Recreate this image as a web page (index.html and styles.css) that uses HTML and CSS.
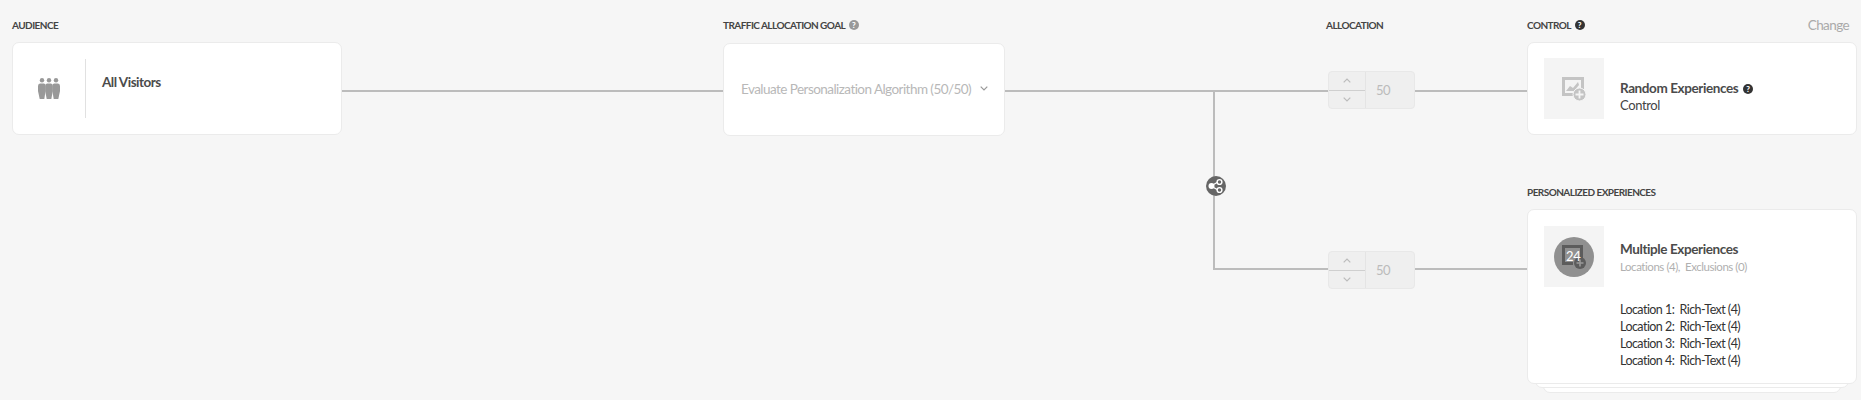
FILE: index.html
```html
<!DOCTYPE html>
<html lang="en">
<head>
    <meta charset="UTF-8">
    <title>Experience Targeting</title>
    <link rel="stylesheet" href="styles.css">
</head>
<body>
    <div class="flow">
        <!-- connector lines -->
        <span class="line" style="left:342px;top:90px;width:381px"></span>
        <span class="line" style="left:1005px;top:90px;width:323px"></span>
        <span class="line" style="left:1415px;top:90px;width:112px"></span>
        <span class="line" style="left:1213px;top:90px;width:2px;height:180px"></span>
        <span class="line" style="left:1213px;top:268px;width:115px"></span>
        <span class="line" style="left:1415px;top:268px;width:112px"></span>

        <span class="split">
            <svg viewBox="0 0 20 20" width="20" height="20">
                <circle cx="10" cy="10" r="10" fill="#666"/>
                <path d="M5 10 L12 6 M5 10 L12 14" stroke="#fff" stroke-width="1.4" fill="none"/>
                <circle cx="5.5" cy="10" r="3" fill="#fff"/>
                <circle cx="13.5" cy="6" r="2.4" fill="#666" stroke="#fff" stroke-width="1.4"/>
                <circle cx="13.5" cy="14" r="2.4" fill="#666" stroke="#fff" stroke-width="1.4"/>
            </svg>
        </span>

        <div class="col col-audience">
            <div class="label">AUDIENCE</div>
            <div class="card audience-card">
                <div class="audience-icon">
                    <svg viewBox="0 0 22 21" width="22" height="21" fill="#999">
                        <circle cx="4" cy="2.2" r="2.2"/>
                        <circle cx="11" cy="2.2" r="2.2"/>
                        <circle cx="18" cy="2.2" r="2.2"/>
                        <path d="M0 8 Q0 5.5 2 5.5 H6 Q7.6 5.5 7.6 8 V13 L6.3 21 H1.7 L0 13 Z"/>
                        <path d="M7.2 8 Q7.2 5.5 9 5.5 H13 Q14.8 5.5 14.8 8 V13 L13.3 21 H8.7 L7.2 13 Z"/>
                        <path d="M14.4 8 Q14.4 5.5 16 5.5 H20 Q22 5.5 22 8 V13 L20.3 21 H15.7 L14.4 13 Z"/>
                    </svg>
                </div>
                <div class="audience-name">All Visitors</div>
            </div>
        </div>

        <div class="col col-goal">
            <div class="label">TRAFFIC ALLOCATION GOAL <span class="help help-grey">?</span></div>
            <div class="card goal-card">
                <span class="goal-text">Evaluate Personalization Algorithm (50/50)</span>
                <svg class="goal-chevron" viewBox="0 0 8 5" width="8" height="5">
                    <path d="M.7 .7 L4 4 L7.3 .7" fill="none" stroke="#999" stroke-width="1.2"/>
                </svg>
            </div>
        </div>

        <div class="col col-allocation">
            <div class="label label-allocation">ALLOCATION</div>
            <div class="stepper stepper-first">
                <div class="stepper-arrows">
                    <span class="arrow"><svg viewBox="0 0 8 5" width="8" height="5"><path d="M.7 4.3 L4 1 L7.3 4.3" fill="none" stroke="#bbb" stroke-width="1.2"/></svg></span>
                    <span class="arrow arrow-down"><svg viewBox="0 0 8 5" width="8" height="5"><path d="M.7 .7 L4 4 L7.3 .7" fill="none" stroke="#bbb" stroke-width="1.2"/></svg></span>
                </div>
                <div class="stepper-value">50</div>
            </div>
            <div class="stepper stepper-second">
                <div class="stepper-arrows">
                    <span class="arrow"><svg viewBox="0 0 8 5" width="8" height="5"><path d="M.7 4.3 L4 1 L7.3 4.3" fill="none" stroke="#bbb" stroke-width="1.2"/></svg></span>
                    <span class="arrow arrow-down"><svg viewBox="0 0 8 5" width="8" height="5"><path d="M.7 .7 L4 4 L7.3 .7" fill="none" stroke="#bbb" stroke-width="1.2"/></svg></span>
                </div>
                <div class="stepper-value">50</div>
            </div>
        </div>

        <div class="col col-experience">
            <div class="label label-row">
                <span>CONTROL <span class="help help-dark">?</span></span>
                <span class="change">Change</span>
            </div>
            <div class="card exp-card control-card">
                <div class="tile">
                    <svg viewBox="0 0 24 24" width="24" height="24">
                        <path d="M0 0 H22 V13 H19 V3 H3 V16 H11 V19 H0 Z" fill="#c4c4c4"/>
                        <path d="M4 14 L8 9 L11 11 L16 5 L17 8 L12 14 Z" fill="#c4c4c4"/>
                        <circle cx="17.5" cy="17.5" r="6.5" fill="#c4c4c4" stroke="#f4f4f4" stroke-width="1"/>
                        <path d="M17.5 13.5 V21.5 M13.5 17.5 H21.5" stroke="#f4f4f4" stroke-width="1.8"/>
                    </svg>
                </div>
                <div class="exp-text exp-text-control">
                    <div class="exp-title">Random Experiences <span class="help help-dark">?</span></div>
                    <div class="exp-sub">Control</div>
                </div>
            </div>

            <div class="label label-personalized">PERSONALIZED EXPERIENCES</div>
            <div class="stack">
                <div class="card exp-card personal-card">
                    <div class="exp-head">
                        <div class="tile">
                            <span class="tile-circle">
                                <svg viewBox="0 0 24 24" width="24" height="24">
                                    <path d="M0 0 H21 V13 H18 V3 H3 V17 H11 V20 H0 Z" fill="#5c5c5c"/>
                                    <circle cx="18" cy="18" r="6" fill="#5c5c5c"/>
                                    <path d="M18 14.5 V21.5 M14.5 18 H21.5" stroke="#999" stroke-width="1.6"/>
                                </svg>
                                <span class="tile-count">24</span>
                            </span>
                        </div>
                        <div class="exp-text">
                            <div class="exp-title">Multiple Experiences</div>
                            <div class="exp-meta">Locations (4),&nbsp; Exclusions (0)</div>
                        </div>
                    </div>
                    <ul class="locations">
                        <li>Location 1:&nbsp; Rich-Text (4)</li>
                        <li>Location 2:&nbsp; Rich-Text (4)</li>
                        <li>Location 3:&nbsp; Rich-Text (4)</li>
                        <li>Location 4:&nbsp; Rich-Text (4)</li>
                    </ul>
                </div>
                <div class="stack-edge stack-edge-1"></div>
                <div class="stack-edge stack-edge-2"></div>
            </div>
        </div>
    </div>
</body>
</html>
```

FILE: styles.css
```css
html, body {
    margin: 0;
    padding: 0;
    height: 400px;
    overflow: hidden;
}
body {
    background-color: #f6f6f6;
    color: #4b4b4b;
    font-family: 'Lato', 'Open Sans', sans-serif;
    font-size: 13px;
}
.flow {
    position: relative;
    display: flex;
    height: 400px;
    box-sizing: border-box;
    padding: 17px 0 0 12px;
}
.line {
    position: absolute;
    height: 2px;
    background-color: #bcbcbc;
}
.split {
    position: absolute;
    left: 1206px;
    top: 176px;
    width: 20px;
    height: 20px;
}
.col {
    position: relative;
    display: flex;
    flex-direction: column;
    flex: none;
}
.col-audience { width: 330px; margin-right: 381px; }
.col-goal { width: 282px; margin-right: 323px; }
.col-allocation { width: 87px; margin-right: 112px; }
.col-experience { width: 330px; }

.label {
    height: 16px;
    line-height: 16px;
    font-size: 10px;
    font-weight: 700;
    letter-spacing: -.55px;
    color: #444;
    white-space: nowrap;
}
.label-allocation { margin-left: -2px; }
.label-row {
    display: flex;
    justify-content: space-between;
    padding-right: 8px;
}
.label-personalized { margin-top: 49px; }
.change {
    font-size: 13.5px;
    font-weight: 400;
    letter-spacing: -.6px;
    color: #aaa;
}
.help {
    display: inline-block;
    width: 10px;
    height: 10px;
    margin-left: 2px;
    border-radius: 50%;
    color: #fff;
    font-size: 8px;
    font-weight: 900;
    letter-spacing: 0;
    line-height: 10px;
    text-align: center;
    vertical-align: 1px;
}
.help-grey { background-color: #999; }
.help-dark { background-color: #333; }

.card {
    box-sizing: border-box;
    background-color: #fff;
    border: 1px solid #ebebeb;
    border-radius: 7px;
}
.audience-card {
    display: flex;
    height: 93px;
    margin-top: 9px;
    padding: 16px 0;
}
.audience-icon {
    display: flex;
    align-items: center;
    justify-content: center;
    box-sizing: border-box;
    width: 73px;
    border-right: 1px solid #e1e1e1;
}
.audience-name {
    padding: 13px 0 0 16px;
    font-size: 13.5px;
    font-weight: 700;
    letter-spacing: -.5px;
    line-height: 20px;
}
.goal-card {
    display: flex;
    align-items: center;
    height: 93px;
    margin-top: 10px;
    padding: 0 16px 2px 17px;
    justify-content: space-between;
}
.goal-text {
    font-size: 13.5px;
    letter-spacing: -.55px;
    color: #b8b8b8;
    white-space: nowrap;
}
.stepper {
    display: flex;
    box-sizing: border-box;
    width: 87px;
    height: 38px;
    background-color: #efefef;
    border: 1px solid #e8e8e8;
    border-radius: 4px;
}
.stepper-first { margin-top: 38px; }
.stepper-second { margin-top: 142px; }
.stepper-arrows {
    display: flex;
    flex-direction: column;
    width: 36px;
    border-right: 1px solid #e4e4e4;
}
.arrow {
    display: flex;
    flex: 1;
    align-items: center;
    justify-content: center;
}
.arrow-down { border-top: 1px solid #cfcfcf; }
.stepper-value {
    padding-left: 10px;
    color: #bbb;
    font-size: 13px;
    letter-spacing: -.5px;
    line-height: 36px;
}
.exp-card {
    padding: 16px;
}
.control-card {
    display: flex;
    align-items: center;
    height: 93px;
    margin-top: 9px;
}
.tile {
    display: flex;
    flex: none;
    align-items: center;
    justify-content: center;
    width: 60px;
    height: 61px;
    background-color: #f4f4f4;
}
.exp-text {
    padding: 3px 0 0 16px;
}
.exp-text-control {
    padding-top: 16px;
}
.exp-title {
    font-size: 13.5px;
    font-weight: 700;
    letter-spacing: -.4px;
    line-height: 17px;
}
.exp-sub {
    font-size: 13px;
    letter-spacing: -.4px;
    line-height: 17px;
    color: #444;
}
.exp-meta {
    font-size: 11.5px;
    letter-spacing: -.45px;
    line-height: 17px;
    color: #b0b0b0;
}
.stack {
    position: relative;
    height: 184px;
    margin-top: 9px;
}
.personal-card {
    position: relative;
    z-index: 2;
    height: 175px;
}
.exp-head {
    display: flex;
    align-items: center;
}
.tile-circle {
    position: relative;
    display: flex;
    align-items: center;
    justify-content: center;
    width: 40px;
    height: 40px;
    border-radius: 50%;
    background-color: #909090;
}
.tile-count {
    position: absolute;
    left: 12px;
    top: 11px;
    color: #fff;
    font-size: 13px;
    font-weight: 400;
    letter-spacing: -.4px;
    line-height: 16px;
}
.locations {
    margin: 14px 0 0 76px;
    padding: 0;
    list-style: none;
    line-height: 17px;
    font-size: 12.5px;
    letter-spacing: -.55px;
    color: #333;
}
.stack-edge {
    position: absolute;
    box-sizing: border-box;
    background-color: #fff;
    border: 1px solid #ebebeb;
    border-radius: 0 0 7px 7px;
    height: 20px;
}
.stack-edge-1 { left: 8px; right: 8px; top: 159px; z-index: 1; }
.stack-edge-2 { left: 16px; right: 16px; top: 164px; z-index: 0; }
```
